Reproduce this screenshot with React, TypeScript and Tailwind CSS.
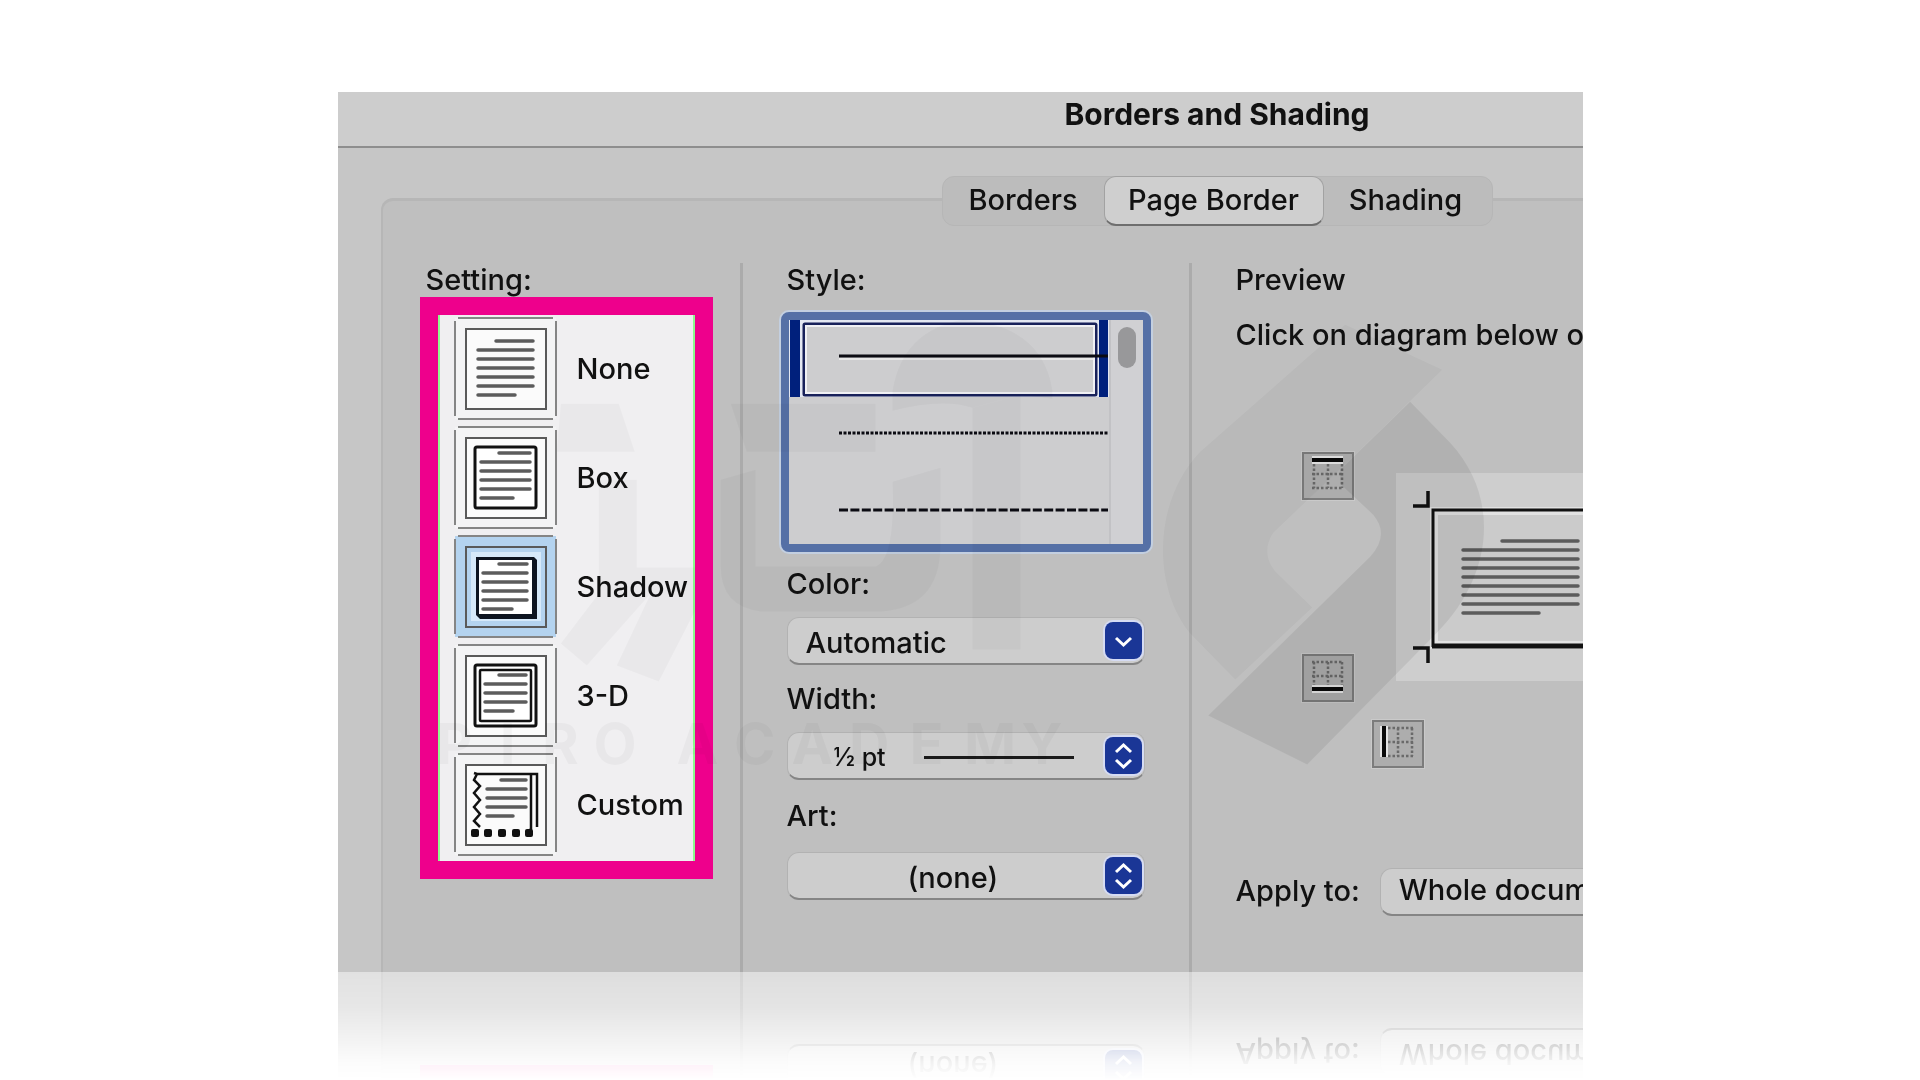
import type { ReactNode } from "react";

type Line = [number, number, number];

function TextLines({ lines }: { lines: Line[] }) {
  return (
    <g stroke="#5c5c5c" strokeWidth="3.500" strokeLinecap="round">
      {lines.map(([x1, x2, y]) => (
        <line key={y} x1={x1} x2={x2} y1={y} y2={y} />
      ))}
    </g>
  );
}

const settings: { name: string; lines: Line[]; art: ReactNode }[] = [
  {
    name: "None",
    lines: [[42, 79, 24], [24, 79, 33], [24, 79, 42], [24, 79, 51], [24, 79, 60], [24, 79, 69], [24, 61, 78]],
    art: null,
  },
  {
    name: "Box",
    lines: [[45, 76, 27], [27, 76, 36], [27, 76, 45], [27, 76, 54], [27, 76, 63], [27, 59, 72]],
    art: <rect x="21" y="21" width="61" height="61" rx="2" fill="#fff" stroke="#111" strokeWidth="3" />,
  },
  {
    name: "Shadow",
    lines: [[45, 73, 29], [29, 73, 38], [29, 73, 47], [29, 73, 56], [29, 73, 65], [29, 58, 74]],
    art: (
      <>
        <rect x="17" y="17" width="70" height="69" fill="#d6e9f9" />
        <path d="M22 22h58l3 3v59H26l-4-4z" fill="#0d1420" />
        <rect x="25" y="25" width="53" height="54" fill="#fff" />
      </>
    ),
  },
  {
    name: "3-D",
    lines: [[45, 72, 31], [31, 72, 40], [31, 72, 49], [31, 72, 58], [31, 59, 67]],
    art: (
      <>
        <rect x="21" y="21" width="61" height="61" rx="2" fill="#fff" stroke="#111" strokeWidth="3" />
        <rect x="26" y="26" width="51" height="51" rx="1" fill="#fff" stroke="#111" strokeWidth="2.500" />
      </>
    ),
  },
  {
    name: "Custom",
    lines: [[47, 72, 27], [33, 72, 36], [33, 72, 45], [33, 72, 54], [33, 59, 63]],
    art: (
      <>
        <path
          d="M20 20l3 1h60v53M77 21v55l-5 5M23 21l-3 6 6 6-6 7 6 7-6 7 6 7-6 7 6 6"
          fill="none"
          stroke="#111"
          strokeWidth="2.500"
        />
        <g fill="#111">
          {[17, 30, 44, 58, 71].map((x) => (
            <rect key={x} x={x} y="76" width="8" height="8" rx="2" />
          ))}
        </g>
      </>
    ),
  },
];

function SettingIcon({ name, lines, art }: { name: string; lines: Line[]; art: ReactNode }) {
  const active = name === "Shadow";
  return (
    <svg viewBox="0 0 103 103" className="size-[103px] shrink-0" aria-hidden="true">
      <rect x="1" y="1" width="101" height="101" fill={active ? "#b4d3ef" : "#f4f4f5"} />
      <path d="M4 1h95M4 102h95M1 4v95M102 4v95" stroke="#858585" strokeWidth="2" />
      <rect x="12" y="12" width="80" height="80" fill={active ? "#b4d3ef" : "#fbfbfb"} stroke="#5a5a5a" strokeWidth="2" />
      {art}
      <TextLines lines={lines} />
    </svg>
  );
}

function Badge({ double = false }: { double?: boolean }) {
  return (
    <span className="pointer-events-none absolute top-[5px] right-[3px] flex size-[37px] items-center justify-center rounded-lg bg-[#1a3696] ring-2 ring-[#d5dbf3]">
      <svg viewBox="0 0 37 37" className="size-full" fill="none" stroke="#fff" strokeWidth="3" aria-hidden="true">
        {double ? <path d="M11 15l7.500-7 7.500 7M11 23l7.500 7 7.500-7" /> : <path d="M11 16l7.500 7 7.500-7" />}
      </svg>
    </span>
  );
}

const selectBox =
  "h-12 w-full appearance-none rounded-xl border border-b-2 border-[#b2b2b2] border-b-[#858585] bg-[#cdcdcd] outline-none";

const styleLines = [
  { label: "Solid line", dash: undefined, active: true },
  { label: "Dotted line", dash: "3 1.500", active: false },
  { label: "Dashed line", dash: "9 2.400", active: false },
];

function EdgeButton({ edge }: { edge: "Top" | "Bottom" | "Left" }) {
  const solid = { Top: "M10 8h31", Bottom: "M10 35h31", Left: "M12 6v31" }[edge];
  const grid = {
    Top: "M10 22h31M10 36h31M12 12v24M26 12v24M40 12v24",
    Bottom: "M10 8h31M10 22h31M12 8v24M26 8v24M40 8v24",
    Left: "M16 8h26M16 22h26M16 36h26M26 8v28M40 8v28",
  }[edge];
  return (
    <button aria-label={edge + " border"} className="h-12 w-[52px] border-2 border-[#7c7c7c] bg-[#adadad] ring-1 ring-[#cacaca]">
      <svg viewBox="0 0 52 48" className="-m-0.5 h-12 w-[52px]" fill="none" aria-hidden="true">
        <path d={grid} stroke="#6a6a6a" strokeWidth="2.500" strokeDasharray="2.500 2" />
        <path d={solid} stroke="#e4e4e4" strokeWidth="8" />
        <path d={solid} stroke="#0a0a0a" strokeWidth="4" />
      </svg>
    </button>
  );
}

function PreviewPage() {
  const rows: Line[] = [[106, 182, 68]];
  for (let i = 0; i < 7; i++) rows.push([67, 182, 77 + i * 9]);
  rows.push([67, 143, 140]);
  return (
    <svg viewBox="0 0 400 208" className="h-52 w-[400px] shrink-0" aria-label="Page preview">
      <rect width="400" height="208" fill="#cecece" />
      <rect x="38" y="38" width="320" height="134" fill="#cbcbcb" stroke="#e2e2e2" strokeWidth="8" />
      <path d="M37 174V37h323" fill="none" stroke="#111" strokeWidth="3" />
      <path d="M36 173h324" stroke="#111" strokeWidth="5" />
      <path d="M17 33h15V18M17 175h15v15" fill="none" stroke="#111" strokeWidth="3.500" />
      <TextLines lines={rows} />
    </svg>
  );
}

function Letters({ word }: { word: string }) {
  return (
    <span className="flex flex-1 justify-between">
      {word.split("").map((letter, i) => (
        <span key={i} className="w-10 text-center">{letter}</span>
      ))}
    </span>
  );
}

function Watermark() {
  return (
    <div className="pointer-events-none absolute inset-0" aria-hidden="true">
      <svg viewBox="337 92 1246 880" className="absolute inset-0 size-full" preserveAspectRatio="xMinYMin">
        <path
          d="M1308 357L1200 452C1152 502 1152 588 1190 634L1235 680L1312 608L1275 572Q1260 553 1273 533L1357 453L1442 370L1345 325Z"
          fill="#000"
          opacity="0.03"
        />
        <path
          d="M1410 402L1450 443C1500 497 1494 575 1437 633L1307 765L1208 716L1370 557Q1390 535 1373 515L1340 484V470Z"
          fill="#000"
          opacity="0.07"
        />
        <g fill="#000" opacity="0.022">
          <path d="M560 404h58l16 48h-78z" />
          <path d="M598 480h38v88h58v44l-36 70-42-16 34-72-64 72-26-22 38-50z" />
          <path d="M730 404h145v48H746z" />
          <path d="M720 480l35-10v97h120q20-8 17-85l48-14v77q0 67-67 67H760q-40-5-40-45z" />
          <path d="M892 411v-20q10-60 70-71q80 5 90 71v8l-32-4-48 13q-30-10-80 3z" />
          <path d="M972 408l48-13v255h-48z" />
        </g>
      </svg>
      <div className="absolute top-[620px] left-[97px] flex text-[56px] leading-[64px] font-bold text-black/3">
        <div className="mr-[43px] flex w-[199px]">
          <Letters word="PIRO" />
        </div>
        <div className="flex w-[385px]">
          <Letters word="ACADEMY" />
        </div>
      </div>
    </div>
  );
}

export default function App() {
  return (
    <main className="min-h-screen overflow-hidden bg-white pt-[92px] font-['Inter',sans-serif] text-[29px] leading-9 font-medium text-[#111]">
      <section
        aria-labelledby="dialog-title"
        className="relative mx-auto w-full max-w-[1245px] overflow-hidden bg-[#c6c6c6] [-webkit-box-reflect:below_0px_linear-gradient(to_top,rgba(0,0,0,0.52)_0px,rgba(0,0,0,0.42)_35px,rgba(0,0,0,0.22)_66px,rgba(0,0,0,0.06)_90px,transparent_108px)]"
      >
        <div className="-mr-[514px]">
          <header className="h-14 border-b-2 border-[#8e8e8e] bg-[#cdcdcd] pt-1 text-center">
            <h1 id="dialog-title" className="text-[30px] font-bold">Borders and Shading</h1>
          </header>

          <div className="pt-7 pl-[43px]">
            <nav className="relative z-10 -ml-[43px] flex justify-center">
              <div role="tablist" className="flex h-[50px] rounded-xl border border-[#b6b6b6] bg-[#bcbcbc]">
                <button role="tab" aria-selected="false" className="w-[161px] pb-0.5">Borders</button>
                <button
                  role="tab"
                  aria-selected="true"
                  className="-my-px w-[220px] rounded-xl border border-b-2 border-[#a2a2a2] border-b-[#6e6e6e] bg-[#cfcfcf] pb-px"
                >
                  Page Border
                </button>
                <button role="tab" aria-selected="false" className="w-[168px] pr-1 pb-0.5">Shading</button>
              </div>
            </nav>

            <div className="-mt-7 flex rounded-tl-xl border-t-3 border-l-2 border-[#b6b6b6] bg-[#bfbfbf] pt-[62px]">
              <fieldset className="flex w-[357px] shrink-0 flex-col pl-[37px]">
                <legend className="contents">
                  <span className="ml-1.5 leading-[34px]">Setting:</span>
                </legend>
                <div className="flex h-[582px] w-[293px] flex-col gap-1.5 border-18 border-[#ee008c] bg-[#f0eff1] pt-0.5 pl-4 shadow-[inset_2px_0_0_#8dfb8d,inset_-2px_0_0_#8dfb8d]">
                  {settings.map((s) => (
                    <label key={s.name} className="flex items-center gap-5">
                      <input
                        type="radio"
                        name="setting"
                        value={s.name}
                        defaultChecked={s.name === "Shadow"}
                        className="sr-only"
                      />
                      <SettingIcon {...s} />
                      {s.name}
                    </label>
                  ))}
                </div>
              </fieldset>

              <div className="flex h-[709px] w-[449px] shrink-0 flex-col border-l-3 border-[#ababab] pl-[38px]">
                <h2 id="style-label" className="ml-1.5 leading-[34px]">Style:</h2>
                <div
                  role="listbox"
                  aria-labelledby="style-label"
                  className="mt-[15px] flex h-60 w-[370px] rounded-lg border-8 border-[#5570a6] bg-[#cdcdcf] ring-2 ring-[#c3cfe0]"
                >
                  <div className="w-80">
                    {styleLines.map((s) => (
                      <button
                        key={s.label}
                        role="option"
                        aria-selected={s.active}
                        aria-label={s.label}
                        className="block h-[77px] w-80"
                      >
                        <svg viewBox="0 0 320 77" className="h-[77px] w-80" fill="none" aria-hidden="true">
                          {s.active && (
                            <>
                              <path d="M0 0h320v77H0z" fill="#e3e7f2" />
                              <path d="M1 0h10v77H1zM310 0h9v77h-9z" fill="#00207c" />
                              <rect x="15" y="4" width="292" height="71" rx="1" fill="#cdcdcf" stroke="#18215a" strokeWidth="3" />
                              <rect x="17" y="6" width="288" height="67" stroke="#f0f0f4" strokeWidth="2" />
                              <path d="M50 39h254" stroke="#e6e6e6" strokeWidth="2" />
                            </>
                          )}
                          <path d="M50 36h269" stroke="#0b0b12" strokeWidth="3" strokeDasharray={s.dash} />
                        </svg>
                      </button>
                    ))}
                  </div>
                  <div className="flex-1 border-l-2 border-[#c2c2c5] bg-[#d0d0d3] pt-[7px] pl-[7px]">
                    <div className="h-[41px] w-[18px] rounded-full bg-[#98989a]" />
                  </div>
                </div>

                <div className="ml-1.5 flex w-[358px] flex-col">
                  <label htmlFor="color" className="mt-3.5">Color:</label>
                  <div className="relative mt-[15px]">
                    <select id="color" className={selectBox + " pt-1 pl-[18px]"}>
                      <option>Automatic</option>
                    </select>
                    <Badge />
                  </div>
                  <label htmlFor="width" className="mt-4">Width:</label>
                  <div className="relative mt-[15px]">
                    <select id="width" className={selectBox + " pt-0.5 pl-[46px] text-[25px]"}>
                      <option>½ pt</option>
                    </select>
                    <span className="pointer-events-none absolute top-6 left-[137px] h-[3px] w-[150px] bg-[#1a1a1a]" />
                    <Badge double />
                  </div>
                  <label htmlFor="art" className="mt-[18px]">Art:</label>
                  <div className="relative mt-[18px]">
                    <select id="art" className={selectBox + " pt-1 pl-[120px]"}>
                      <option>(none)</option>
                    </select>
                    <Badge double />
                  </div>
                </div>
              </div>

              <div className="flex min-w-0 flex-1 flex-col border-l-3 border-[#ababab] pl-11">
                <h2 className="leading-[34px]">Preview</h2>
                <p className="mt-5 whitespace-nowrap">Click on diagram below or use buttons</p>
                <div className="mt-[99px] ml-[66px] flex items-center gap-[42px]">
                  <div className="flex h-[250px] flex-col justify-between">
                    <EdgeButton edge="Top" />
                    <EdgeButton edge="Bottom" />
                  </div>
                  <PreviewPage />
                </div>
                <div className="mt-[18px] ml-[136px] flex">
                  <EdgeButton edge="Left" />
                </div>
                <div className="mt-[100px] flex items-center gap-5">
                  <label htmlFor="apply" className="-mt-0.5">Apply to:</label>
                  <div className="w-[360px]">
                    <select id="apply" className={selectBox + " pb-1 pl-[18px]"}>
                      <option>Whole document</option>
                    </select>
                  </div>
                </div>
              </div>
            </div>
          </div>
        </div>
        <Watermark />
      </section>
    </main>
  );
}
